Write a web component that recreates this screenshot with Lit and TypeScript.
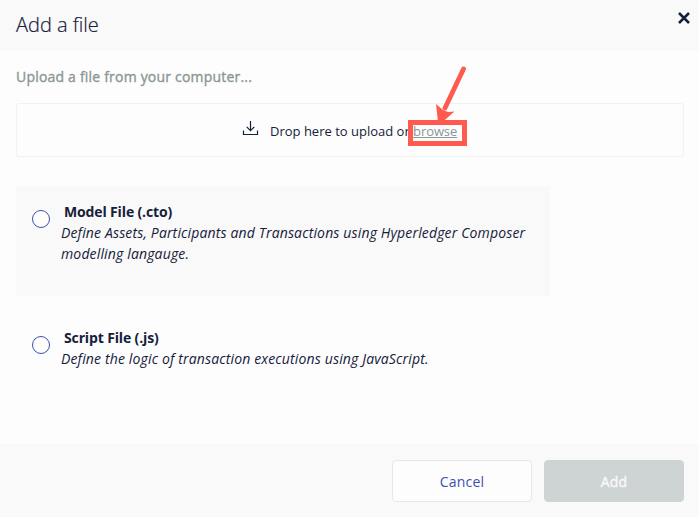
import { LitElement, html, css } from "lit";
import { customElement, property } from "lit/decorators.js";

@customElement("file-option")
class FileOption extends LitElement {
  @property() label = "";
  @property() description = "";

  static styles = css`
    :host { display: flex; box-sizing: border-box; width: 534px; height: 110px; padding: 16px 8px 0 16px; }
    .radio { flex: none; box-sizing: border-box; width: 18px; height: 18px; margin: 8px 11px 0 0; border: 1px solid #3d4fb0; border-radius: 50%; background: #fff; }
    .label { margin: 0 0 0 3px; font-weight: 700; line-height: 20px; letter-spacing: -0.14px; }
    .description { margin: 0; font-style: italic; line-height: 21px; letter-spacing: 0.15px; }
  `;

  render() {
    return html`
      <span class="radio"></span>
      <div>
        <p class="label">${this.label}</p>
        <p class="description">${this.description}</p>
      </div>
    `;
  }
}

@customElement("app-root")
class AppRoot extends LitElement {
  static styles = css`
    :host { display: flex; flex-direction: column; width: 699px; height: 517px; overflow: hidden; background: #fdfdfd; color: #15203a; font: 14px/20px "Open Sans", "Noto Sans", sans-serif; }
    header { flex: none; display: flex; justify-content: space-between; box-sizing: border-box; height: 50px; padding: 0 9px 0 16px; background: #f9f9f9; }
    h1 { margin: 0; font-size: 20px; font-weight: 300; line-height: 49px; -webkit-text-stroke: 0.2px currentColor; }
    .close { width: 12px; height: 12px; margin-top: 12px; }
    main { flex: 1; padding: 16px 15px 0 16px; }
    .hint { margin: 0 0 17px; padding-top: 1px; color: #8a9794; line-height: 19px; letter-spacing: 0.2px; -webkit-text-stroke: 0.35px currentColor; }
    .drop { display: flex; box-sizing: border-box; height: 54px; border: 1px solid #f0f2f3; border-radius: 3px; padding: 17px 0 0 225px; font-size: 13px; white-space: pre; }
    .upload { width: 17px; height: 16px; margin-right: 11px; }
    .target { position: relative; }
    .browse { color: #8a9794; text-decoration: underline; letter-spacing: -0.1px; }
    .frame { position: absolute; left: -5px; top: -1px; box-sizing: border-box; width: 59px; height: 26px; border: 5px solid #ff5a4d; }
    .arrow { position: absolute; left: 17px; top: -57px; width: 40px; height: 60px; }
    .options { display: grid; gap: 16px; margin-top: 29px; }
    .shaded { background: #f9f9f9; }
    footer { flex: none; display: flex; justify-content: flex-end; gap: 12px; box-sizing: border-box; height: 73px; padding: 16px 15px 0 0; background: #f9f9f9; }
    button { box-sizing: border-box; width: 140px; height: 42px; padding: 2px 0 0; border: 1px solid #e0ebe8; border-radius: 4px; background: #fdfdfd; color: #3d4fb0; font: 14px/20px "Open Sans", "Noto Sans", sans-serif; letter-spacing: 0.2px; }
    .add { border-color: #ced4d3; background: #ced4d3; color: #f9f9f9; -webkit-text-stroke: 0.4px currentColor; }
  `;

  render() {
    return html`
      <header>
        <h1>Add a file</h1>
        <svg class="close" viewBox="0 0 12 12" fill="none" stroke="#15203a" stroke-width="2.5">
          <path d="M1 1l10 10M11 1L1 11" />
        </svg>
      </header>
      <main>
        <p class="hint">Upload a file from your computer...</p>
        <div class="drop">
          <svg class="upload" viewBox="0 0 17 16" fill="none" stroke="#15203a" stroke-width="1.2">
            <path d="M8.5 0v9.5M4.7 5.8l3.8 3.8 3.8-3.8M1.5 9.5v4h14v-4" />
          </svg>
          <span>Drop here to upload or </span><span class="target"><span class="browse">browse</span><span class="frame"></span>
            <svg class="arrow" viewBox="0 0 40 60">
              <path d="M33.5 5L15 44" stroke="#ff5a4d" stroke-width="4.8" stroke-linecap="round" />
              <path d="M6 40l7 6 5 2 6.5-.5L12.500 58H8z" fill="#ff5a4d" />
            </svg></span>
        </div>
        <div class="options">
          <file-option class="shaded" label="Model File (.cto)" description="Define Assets, Participants and Transactions using Hyperledger Composer modelling langauge."></file-option>
          <file-option label="Script File (.js)" description="Define the logic of transaction executions using JavaScript."></file-option>
        </div>
      </main>
      <footer>
        <button>Cancel</button>
        <button class="add">Add</button>
      </footer>
    `;
  }
}
